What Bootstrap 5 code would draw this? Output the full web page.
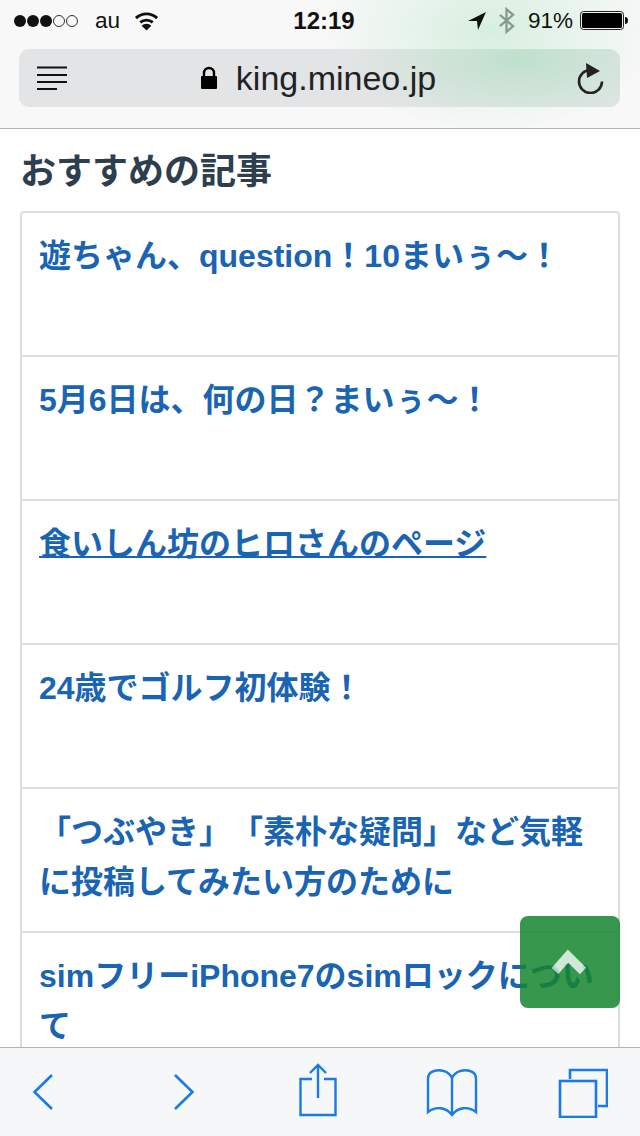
<!DOCTYPE html>
<html lang="ja">
<head>
<meta charset="UTF-8">
<meta name="viewport" content="width=device-width, initial-scale=1.0">
<title>おすすめの記事</title>
<link rel="stylesheet" href="https://cdn.jsdelivr.net/npm/bootstrap@5.3.0/dist/css/bootstrap.min.css">
<style>
html, body { height: 100%; }
body { background: #fff; font-family: "Liberation Sans", "Noto Sans CJK JP", sans-serif; overflow: hidden; text-spacing-trim: space-all; }
.app-shell { height: 1136px; width: 640px; position: relative; }
.safari-top {
  height: 129px; flex: none; border-bottom: 1px solid #b2b2b2;
  background: radial-gradient(ellipse 170px 105px at 490px 30px, #d8eee0 0%, #e8f4ec 50%, #f8f8f8 100%) #f8f8f8;
}
.status-row { height: 38px; padding: 3px 12px 0 13px; font-size: 22.5px; color: #111; }
.status-time { font-size: 24px; font-weight: 700; width: 62px; }
.status-left { width: 280px; }
.status-right { width: 273px; }
.status-gap { margin-left: 14px; }
.bt-icon { margin: 0 13px 0 12px; }
.battery-icon { margin-left: 7px; }
.url-pill {
  height: 58px; margin: 11px 20px 0 19px; padding: 0 16px 0 18px; border-radius: 10px;
  background: radial-gradient(ellipse 170px 70px at 500px 10px, #bfe0cd 0%, #d3e4da 55%, #e3e4e6 100%) #e3e4e6;
}
.url-center { padding-right: 8px; }
.url-host { font-size: 34px; color: #222; line-height: 1; margin-left: 18px; }
.page-body { flex: 1 1 auto; overflow: hidden; padding: 0 20px; }
.page-title { font-size: 36px; line-height: 43px; font-weight: 700; color: #2d3e4f; margin: 21px 0 18px 0; }
.article-list { border-radius: 4px; }
.article-item {
  height: 144px; padding: 18px 16px 0 17px; border: 2px solid #ddd; font-size: 32px; line-height: 50px; font-weight: 700;
}
.article-item:first-child { height: 146px; }
.article-item a { color: #1a64b4; text-decoration: none; }
.article-item a.is-hover { text-decoration: underline; text-decoration-thickness: 2px; }
.safari-bottom {
  height: 89px; flex: none; border-top: 1px solid #b2b2b2; background: #f5f7f9;
}
.tool-back { margin-left: 32px; }
.tool-forward { margin-left: 119px; }
.tool-share { margin-left: 104px; margin-top: -4px; }
.tool-book { margin-left: 88px; margin-top: 2px; }
.tool-tabs { margin-left: 80px; margin-top: 2px; }
.scroll-top {
  position: absolute; left: 520px; top: 916px; width: 100px; height: 92px; border-radius: 8px;
  background: rgb(21, 133, 47); opacity: .85;
}
</style>
</head>
<body>
<div class="app-shell d-flex flex-column">
  <header class="safari-top">
    <div class="status-row d-flex align-items-center justify-content-between">
      <div class="status-left d-flex align-items-center">
        <svg width="68" height="14" viewBox="0 0 68 14">
          <circle cx="7" cy="7" r="6" fill="#111"/><circle cx="20" cy="7" r="6" fill="#111"/><circle cx="33" cy="7" r="6" fill="#111"/>
          <circle cx="46" cy="7" r="5.5" fill="none" stroke="#333"/><circle cx="59" cy="7" r="5.5" fill="none" stroke="#333"/>
        </svg>
        <span class="status-gap">au</span>
        <svg class="status-gap" width="25" height="20" viewBox="0 0 26 20" fill="none" stroke="#111" stroke-width="3">
          <path d="M2 7a16 16 0 0 1 22 0"/><path d="M6.500 11.500a10 10 0 0 1 13 0"/><path d="M13 20l-5-5a7 7 0 0 1 10 0z" fill="#111" stroke="none"/>
        </svg>
      </div>
      <div class="status-time text-center">12:19</div>
      <div class="status-right d-flex align-items-center justify-content-end">
        <svg width="18" height="18" viewBox="0 0 18 18"><path d="M0 9 18 0l-8 18-1-9z" fill="#111"/></svg>
        <svg class="bt-icon" width="17" height="27" viewBox="0 0 18 28" fill="none" stroke="#8a9a90" stroke-width="2.4"><path d="M2 8l14 12-7 6V2l7 6L2 20"/></svg>
        <span>91%</span>
        <svg class="battery-icon" width="48" height="20" viewBox="0 0 48 20">
          <rect x=".5" y=".5" width="43" height="18" rx="3" fill="none" stroke="#222"/><rect x="2" y="2" width="40" height="15" rx="1.5" fill="#000"/><path d="M45 6c2 0 3 1 3 3.500S47 13 45 13z" fill="#111"/>
        </svg>
      </div>
    </div>
    <div class="url-pill d-flex align-items-center">
      <svg width="30" height="24" viewBox="0 0 30 24" stroke="#111" stroke-width="1.8"><path d="M0 1.500h30M0 9h30M0 16h30M0 23h20"/></svg>
      <div class="url-center flex-grow-1 d-flex align-items-center justify-content-center">
        <svg width="18" height="24" viewBox="0 0 18 24"><path d="M4 11V7a5 5 0 0 1 10 0v4" fill="none" stroke="#000" stroke-width="2.4"/><rect x="1" y="10" width="16" height="13" rx="1" fill="#000"/></svg>
        <span class="url-host">king.mineo.jp</span>
      </div>
      <svg width="27" height="31" viewBox="0 0 27 31" fill="none"><path d="M13.500 7A11.500 11.500 0 1 0 25 18.500" stroke="#222" stroke-width="2.600"/><path d="M9 0l14 8-13 7z" fill="#222"/></svg>
    </div>
  </header>

  <main class="page-body">
    <h2 class="page-title">おすすめの記事</h2>
    <div class="list-group article-list">
      <div class="list-group-item article-item"><a href="#">遊ちゃん、question！10まいぅ〜！</a></div>
      <div class="list-group-item article-item"><a href="#">5月6日は、何の日？まいぅ〜！</a></div>
      <div class="list-group-item article-item"><a href="#" class="is-hover">食いしん坊のヒロさんのページ</a></div>
      <div class="list-group-item article-item"><a href="#">24歳でゴルフ初体験！</a></div>
      <div class="list-group-item article-item"><a href="#">「つぶやき」「素朴な疑問」など気軽に投稿してみたい方のために</a></div>
      <div class="list-group-item article-item"><a href="#">simフリーiPhone7のsimロックについて</a></div>
    </div>
  </main>

  <footer class="safari-bottom d-flex align-items-center">
    <svg class="tool-back" width="22" height="38" viewBox="0 0 22 38" fill="none" stroke="#1a7ae6" stroke-width="2.600"><path d="M20 2 2.500 19 20 36"/></svg>
    <svg class="tool-forward" width="22" height="38" viewBox="0 0 22 38" fill="none" stroke="#1a7ae6" stroke-width="2.600"><path d="M2 2l17.500 17L2 36"/></svg>
    <svg class="tool-share" width="39" height="54" viewBox="0 0 39 54" fill="none" stroke="#1a7ae6" stroke-width="2.400"><path d="M13 16H1.500v36h35V16H25"/><path d="M19 35V2M11 10l8-8 8 8"/></svg>
    <svg class="tool-book" width="52" height="50" viewBox="0 0 52 50" fill="none" stroke="#1a7ae6" stroke-width="2.400"><path d="M26 10C23 3 14 1 8 3 4 4 2 6 2 11v33c8-6 18-5 24 3 6-8 16-9 24-3V11c0-5-2-7-6-8-6-2-15 0-18 7zM26 10v37"/></svg>
    <svg class="tool-tabs" width="50" height="50" viewBox="0 0 50 50" fill="none" stroke="#1a7ae6" stroke-width="2.600"><path d="M12 11V2h37v36h-9"/><rect x="2" y="13" width="36" height="36"/></svg>
  </footer>

  <a href="#" class="scroll-top d-flex align-items-center justify-content-center" aria-label="ページトップへ">
    <svg width="40" height="30" viewBox="0 0 40 30" fill="none"><path d="M5 24 18 9l15 15" stroke="rgb(199,229,209)" stroke-width="9"/></svg>
  </a>
</div>
<script src="https://cdn.jsdelivr.net/npm/bootstrap@5.3.0/dist/js/bootstrap.bundle.min.js"></script>
</body>
</html>
